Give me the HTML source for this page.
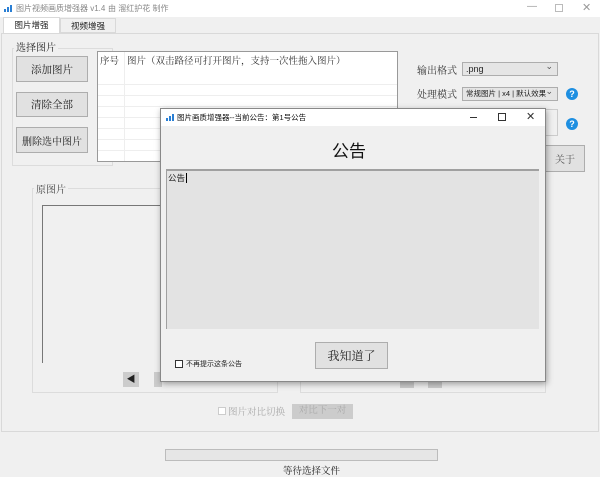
<!DOCTYPE html>
<html><head><meta charset="utf-8"><style>
*{box-sizing:border-box;margin:0;padding:0}
body{width:600px;height:477px;background:#f0f0f0;position:relative;overflow:hidden;font-family:"Liberation Sans","Noto Sans CJK SC",sans-serif;font-size:11px;color:#222}
.a{position:absolute;white-space:nowrap}
.serif{font-family:"Liberation Serif","Noto Serif CJK SC",serif}
.btn{position:absolute;background:#e1e1e1;border:1px solid #adadad;display:flex;align-items:center;justify-content:center;white-space:nowrap}
.grp{position:absolute;border:1px solid #dcdcdc}
.lbl{position:absolute;background:#f0f0f0;padding:0 2px;white-space:nowrap}
.sel{position:absolute;background:#e5e5e5;border:1px solid #adadad;font-size:7.5px;padding-left:3px;line-height:12px;white-space:nowrap;overflow:hidden}
.sel:after{content:"⌄";position:absolute;right:4px;top:-3px;font-size:9px;color:#555}
.help{position:absolute;width:12px;height:12px;border-radius:50%;background:#1e8fe1;color:#fff;font-size:9px;font-weight:bold;text-align:center;line-height:12px}
</style></head><body>
<div class="a" style="left:0;top:0;width:600px;height:17px;background:#fff"></div>
<svg class="a" style="left:4px;top:4px" width="10" height="8"><rect x="0" y="5" width="2" height="3" fill="#2a7fd4"/><rect x="3" y="3" width="2" height="5" fill="#2a7fd4"/><rect x="6" y="1" width="2" height="7" fill="#2a7fd4"/></svg>
<div class="a" style="left:16px;top:3px;font-size:8px;color:#888">图片视频画质增强器 v1.4</div>
<div class="a" style="left:108px;top:3px;font-size:8px;color:#888">由 溜红护花 制作</div>
<div class="a" style="left:527px;top:1px;color:#999;font-size:10px">—</div>
<div class="a" style="left:555px;top:4px;width:8px;height:8px;border:1px solid #bbb"></div>
<div class="a" style="left:582px;top:1px;color:#999;font-size:11px">✕</div>
<!-- tabs -->
<div class="a" style="left:3px;top:17px;width:57px;height:17px;background:#fff;border:1px solid #d9d9d9;border-bottom:none;font-size:8.5px;text-align:center;line-height:15px">图片增强</div>
<div class="a" style="left:60px;top:18px;width:56px;height:15px;background:#f0f0f0;border:1px solid #d9d9d9;font-size:8.5px;text-align:center;line-height:14px">视频增强</div>
<div class="a" style="left:1px;top:33px;width:598px;height:399px;border:1px solid #d9d9d9;background:#f0f0f0"></div>
<!-- select group -->
<div class="grp" style="left:12px;top:48px;width:101px;height:118px"></div>
<div class="lbl serif" style="left:14px;top:39px;font-size:10px">选择图片</div>
<div class="btn serif" style="left:16px;top:56px;width:72px;height:26px;font-size:10.5px">添加图片</div>
<div class="btn serif" style="left:16px;top:92px;width:72px;height:25px;font-size:10.5px">清除全部</div>
<div class="btn serif" style="left:16px;top:127px;width:72px;height:26px;font-size:10px">删除选中图片</div>
<div class="a" style="left:97px;top:51px;width:301px;height:111px;background:#fff;border:1px solid #999"></div>
<div class="a" style="left:98px;top:74px;width:299px;height:85px;background:repeating-linear-gradient(#fff 0,#fff 10px,#eee 10px,#eee 11px)"></div>
<div class="a" style="left:124px;top:52px;width:1px;height:109px;background:#eee"></div>
<div class="a serif" style="left:100px;top:53px;font-size:9.5px;color:#333">序号</div>
<div class="a serif" style="left:127px;top:53px;font-size:9.5px;color:#333">图片（双击路径可打开图片，支持一次性拖入图片）</div>
<!-- right -->
<div class="a serif" style="left:417px;top:62px;font-size:10px;color:#333">输出格式</div>
<div class="sel" style="left:462px;top:62px;width:96px;height:14px;font-size:9px">.png</div>
<div class="a serif" style="left:417px;top:86px;font-size:10px;color:#333">处理模式</div>
<div class="sel" style="left:462px;top:87px;width:96px;height:14px">常规图片 | x4 | 默认效果</div>
<div class="help" style="left:566px;top:88px">?</div>
<div class="a" style="left:462px;top:109px;width:96px;height:27px;border:1px solid #ccc"></div>
<div class="help" style="left:566px;top:118px">?</div>
<div class="btn serif" style="left:545px;top:145px;width:40px;height:27px;color:#555;font-size:10px">关于</div>
<!-- image groups -->
<div class="grp" style="left:32px;top:188px;width:246px;height:205px"></div>
<div class="lbl serif" style="left:34px;top:181px;font-size:10px;color:#444">原图片</div>
<div class="a" style="left:42px;top:205px;width:140px;height:158px;border-left:1px solid #777;border-top:1px solid #777"></div>
<div class="a" style="left:123px;top:372px;width:16px;height:15px;background:#ccc;font-size:9px;text-align:center;line-height:15px">◀</div>
<div class="a" style="left:154px;top:372px;width:8px;height:15px;background:#ccc"></div>
<div class="grp" style="left:300px;top:188px;width:246px;height:205px"></div>
<div class="a" style="left:400px;top:380px;width:14px;height:8px;background:#ccc"></div>
<div class="a" style="left:428px;top:380px;width:14px;height:8px;background:#ccc"></div>
<div class="a" style="left:218px;top:407px;width:8px;height:8px;border:1px solid #ccc;background:#fff"></div>
<div class="a serif" style="left:228px;top:404px;font-size:9.5px;color:#aaa">图片对比切换</div>
<div class="a serif" style="left:292px;top:404px;width:61px;height:15px;background:#ccc;color:#aaa;font-size:9.5px;text-align:center;line-height:15px">对比下一对</div>
<!-- progress -->
<div class="a" style="left:165px;top:449px;width:273px;height:12px;background:#e6e6e6;border:1px solid #bcbcbc"></div>
<div class="a serif" style="left:283px;top:463px;font-size:9.5px">等待选择文件</div>
<!-- dialog -->
<div class="a" style="left:160px;top:108px;width:386px;height:274px;background:#f0f0f0;border:1px solid #888;box-shadow:1px 2px 6px rgba(0,0,0,.35)"></div>
<div class="a" style="left:161px;top:109px;width:384px;height:17px;background:#fff"></div>
<svg class="a" style="left:166px;top:113px" width="9" height="8"><rect x="0" y="5" width="2" height="3" fill="#2a7fd4"/><rect x="3" y="3" width="2" height="5" fill="#2a7fd4"/><rect x="6" y="1" width="2" height="7" fill="#2a7fd4"/></svg>
<div class="a" style="left:177px;top:112px;font-size:7.5px;color:#111">图片画质增强器--当前公告：第1号公告</div>
<div class="a" style="left:470px;top:117px;width:7px;height:1px;background:#333"></div>
<div class="a" style="left:498px;top:113px;width:8px;height:8px;border:1px solid #333"></div>
<div class="a" style="left:526px;top:110px;font-size:11px;color:#333">✕</div>
<div class="a" style="left:332px;top:137px;font-size:17px;color:#111">公告</div>
<div class="a" style="left:166px;top:169px;width:373px;height:160px;background:#e3e3e3;border-top:2px solid #a0a0a0;border-left:1px solid #a0a0a0"></div>
<div class="a" style="left:168px;top:172px;font-size:8.5px">公告<span style="border-left:1px solid #000;margin-left:1px"></span></div>
<div class="btn serif" style="left:315px;top:342px;width:73px;height:27px;font-size:12px">我知道了</div>
<div class="a" style="left:175px;top:360px;width:8px;height:8px;border:1px solid #333;background:#fff"></div>
<div class="a" style="left:186px;top:359px;font-size:7px">不再提示这条公告</div>
</body></html>
